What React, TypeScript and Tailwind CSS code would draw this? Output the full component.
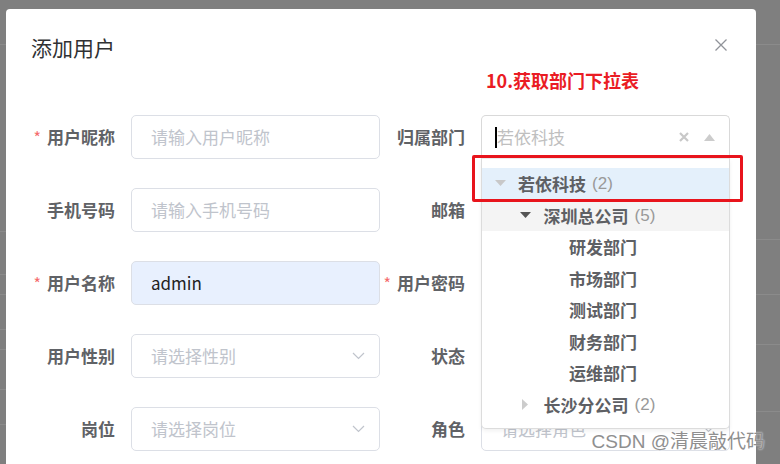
import React from 'react';

type Field = {
  label: string;
  required?: boolean;
  placeholder?: string;
  value?: string;
  select?: boolean;
  autofill?: boolean;
};

const LEFT: Field[] = [
  { label: '用户昵称', required: true, placeholder: '请输入用户昵称' },
  { label: '手机号码', placeholder: '请输入手机号码' },
  { label: '用户名称', required: true, value: 'admin', autofill: true },
  { label: '用户性别', placeholder: '请选择性别', select: true },
  { label: '岗位', placeholder: '请选择岗位', select: true },
];

// the email / password inputs sit under the open tree menu, so no placeholder is shown
const RIGHT: Field[] = [
  { label: '归属部门' },
  { label: '邮箱' },
  { label: '用户密码', required: true },
  { label: '状态' },
  { label: '角色', placeholder: '请选择角色', select: true },
];

type Node = { name: string; count?: number; level: number; arrow?: 'open' | 'openDark' | 'closed'; bg?: string };

const TREE: Node[] = [
  { name: '若依科技', count: 2, level: 0, arrow: 'open', bg: 'bg-[#e4f0fb]' },
  { name: '深圳总公司', count: 5, level: 1, arrow: 'openDark', bg: 'bg-[#f4f4f4]' },
  { name: '研发部门', level: 2 },
  { name: '市场部门', level: 2 },
  { name: '测试部门', level: 2 },
  { name: '财务部门', level: 2 },
  { name: '运维部门', level: 2 },
  { name: '长沙分公司', count: 2, level: 1, arrow: 'closed' },
];

function Chevron() {
  return (
    <svg width="13" height="8" viewBox="0 0 13 8" className="shrink-0">
      <path d="M1 1 L6.5 6.5 L12 1" fill="none" stroke="#c0c4cc" strokeWidth="1.2" />
    </svg>
  );
}

function Label({ f, width }: { f: Field; width: string }) {
  return (
    <div className={`${width} shrink-0 pr-[16px] text-right text-[17px] font-bold text-[#606266] leading-[44px]`}>
      {f.required && <span className="mr-[6px] font-normal text-[#f56c6c] text-[16px]">*</span>}
      {f.label}
    </div>
  );
}

function Input({ f }: { f: Field }) {
  return (
    <div
      className={`flex h-[44px] w-[249px] items-center justify-between rounded-[5px] border border-[#dcdfe6] pl-[19px] pr-[14px] text-[17px] ${
        f.autofill ? 'bg-[#e8f0fe]' : 'bg-white'
      }`}
    >
      {f.value ? <span className="text-[#222]">{f.value}</span> : <span className="text-[#c0c4cc]">{f.placeholder}</span>}
      {f.select && <Chevron />}
    </div>
  );
}

function TreeArrow({ kind }: { kind?: Node['arrow'] }) {
  if (kind === 'closed')
    return (
      <svg width="7" height="11" viewBox="0 0 7 11">
        <path d="M0 0 L6 5.5 L0 11 Z" fill="#ccc" />
      </svg>
    );
  if (kind)
    return (
      <svg width="11" height="7" viewBox="0 0 11 7">
        <path d="M0 0 L11 0 L5.5 6 Z" fill={kind === 'openDark' ? '#555' : '#c8c8c8'} />
      </svg>
    );
  return null;
}

function DeptSelect() {
  return (
    <div className="relative">
      <div className="flex h-[44px] w-[249px] items-center rounded-t-[5px] border border-[#d9d9d9] border-b-[#ececec] bg-white pl-[13px] pr-[14px] text-[17px]">
        <div className="h-[21px] w-[2px] bg-black" />
        <span className="flex-1 text-[#bfbfbf]">若依科技</span>
        <svg width="10" height="10" viewBox="0 0 10 10" className="mr-[15px]">
          <path d="M1 1 L9 9 M9 1 L1 9" stroke="#c8c8c8" strokeWidth="2.2" />
        </svg>
        <svg width="11" height="7" viewBox="0 0 11 7">
          <path d="M0 7 L5.5 0 L11 7 Z" fill="#ccc" />
        </svg>
      </div>
      <div className="absolute left-0 top-[44px] z-10 w-[249px] rounded-b-[5px] border border-t-0 border-[#dcdcdc] bg-white pb-[8px] pt-[9px] shadow-[0_2px_4px_rgba(0,0,0,0.06)]">
        {TREE.map(n => (
          <div
            key={n.name}
            className={`flex h-[31.5px] items-center ${n.bg ?? ''}`}
            style={{ paddingLeft: 8 + n.level * 25.5 }}
          >
            <div className="flex w-[20px] shrink-0 items-center justify-center">
              <TreeArrow kind={n.arrow} />
            </div>
            <span className="ml-[8px] text-[17px] font-bold text-[#5e6064]">{n.name}</span>
            {n.count !== undefined && (
              <span className="ml-[6px] font-['Liberation_Sans',sans-serif] text-[17px] text-[#999]">({n.count})</span>
            )}
          </div>
        ))}
      </div>
    </div>
  );
}

function BgStrip({ lines }: { lines: string[] }) {
  return (
    <div className="flex flex-col">
      {lines.map((h, i) => (
        <div key={i} className={`${h} border-b border-[#8b8b8b]`} />
      ))}
    </div>
  );
}

export default function App() {
  return (
    <div className="relative flex h-[464px] w-[780px] overflow-hidden bg-[#7f7f7f] font-['Noto_Sans_CJK_SC','Noto_Sans',sans-serif]">
      <div className="w-[6px] shrink-0">
        <BgStrip lines={['h-[45px]', 'h-[187px]', 'h-[43px]', 'h-[20px]', 'h-[35px]', 'h-[20px]', 'h-[40px]', 'h-[35px]']} />
      </div>

      <div className="relative mt-[9px] h-[470px] w-[750px] shrink-0 rounded-t-[4px] bg-white">
        <div className="flex h-[50px] items-start justify-between pl-[25px] pr-[29px] pt-[27px]">
          <span className="text-[21px] leading-[22px] text-[#303133]">添加用户</span>
          <svg width="12" height="12" viewBox="0 0 12 12" className="mt-[3px]">
            <path d="M0.5 0.5 L11.5 11.5 M11.5 0.5 L0.5 11.5" stroke="#909399" strokeWidth="1.3" />
          </svg>
        </div>

        <div className="mt-[56px] flex flex-col gap-[29px]">
          {LEFT.map((l, i) => {
            const r = RIGHT[i];
            return (
              <div key={l.label} className="flex items-center">
                <Label f={l} width="w-[125px]" />
                <Input f={l} />
                <Label f={r} width="w-[101px]" />
                {i === 0 ? <DeptSelect /> : i === 3 ? <div className="h-[44px] w-[249px]" /> : <Input f={r} />}
              </div>
            );
          })}
        </div>

        <div className="absolute left-[480px] top-[58px] text-[18px] font-bold text-[#ea1c24]">10.获取部门下拉表</div>
        <div className="absolute left-[466px] top-[146px] z-20 h-[47px] w-[271px] rounded-[2px] border-[3px] border-[#e8141c]" />
      </div>

      <div className="flex-1">
        <BgStrip lines={['h-[45px]', 'h-[195px]', 'h-[55px]', 'h-[50px]', 'h-[67px]']} />
      </div>

      <div className="absolute bottom-[8px] right-[15px] z-30 font-['Liberation_Sans','Noto_Sans_CJK_SC',sans-serif] text-[19px] text-[#8f8f8f] [text-shadow:0_0_2px_#fff]">
        CSDN @清晨敲代码
      </div>
    </div>
  );
}
